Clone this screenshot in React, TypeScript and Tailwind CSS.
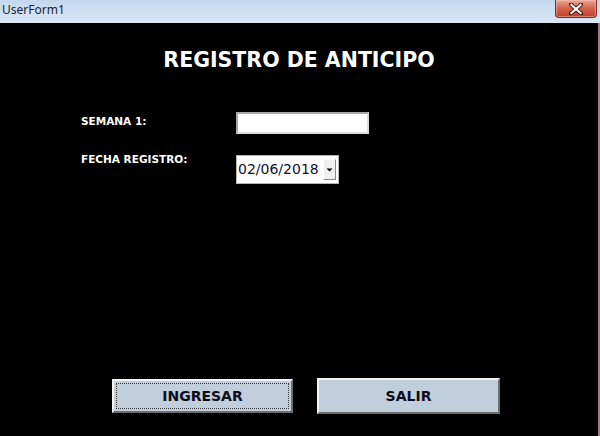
import React from "react";

const CloseIcon = () => (
  <svg width="14" height="12" viewBox="0 0 14 12">
    <path d="M2 1.5 L12 10.5 M12 1.5 L2 10.5" stroke="#4a1a14" strokeWidth="4" strokeLinecap="square" />
    <path d="M2.5 2 L11.5 10 M11.5 2 L2.5 10" stroke="#ffffff" strokeWidth="2.2" strokeLinecap="square" />
  </svg>
);

const App = () => {
  return (
    <div className="w-[600px] h-[436px] flex flex-col overflow-hidden font-['DejaVu_Sans',sans-serif]">
      <div className="h-[23px] flex items-start justify-between bg-gradient-to-b from-[#c3d8ee] via-[#cfe0f2] to-[#dbe8f5] shrink-0">
        <span className="pl-[2px] pt-[3px] text-[12px] leading-[14px] text-[#1e1e2e] font-['Noto_Sans',sans-serif]">
          UserForm1
        </span>
        <div className="mr-[3px] w-[42px] h-[18px] flex items-center justify-center rounded-b-[4px] border border-t-0 border-[#7e2a1f] bg-gradient-to-b from-[#e8a595] via-[#d4624c] to-[#c0402a] shadow-[inset_0_0_0_1px_rgba(255,200,190,0.5)]">
          <CloseIcon />
        </div>
      </div>

      <div className="flex-1 flex flex-col bg-black border-r-2 border-[#9d7b88]">
        <h1 className="pt-[25px] text-center text-white font-bold text-[20.5px] leading-[24px]">
          REGISTRO DE ANTICIPO
        </h1>

        <div className="mt-[40px] pl-[81px] flex flex-col">
          <div className="flex items-start">
            <span className="w-[155px] pt-[3px] text-white font-bold text-[10.5px] leading-[13px]">
              SEMANA 1:
            </span>
            <div className="w-[133px] h-[22px] bg-white border-2 border-t-[#a8a8a8] border-l-[#a8a8a8] border-b-[#dcdcdc] border-r-[#dcdcdc]" />
          </div>

          <div className="mt-[18px] flex items-start">
            <span className="w-[155px] pt-[1px] text-white font-bold text-[10.5px] leading-[13px]">
              FECHA REGISTRO:
            </span>
            <div className="mt-[3px] w-[103px] h-[29px] flex items-center bg-white border border-[#b4b4b4]">
              <span className="flex-1 pl-[1px] text-[14px] leading-[17px] text-[#101038]">02/06/2018</span>
              <div className="mr-[2px] w-[13px] h-[21px] flex items-center justify-center bg-[#f0f0f0] border border-t-[#ffffff] border-l-[#ffffff] border-b-[#8a8a8a] border-r-[#8a8a8a]">
                <svg width="7" height="4" viewBox="0 0 7 4">
                  <path d="M0.5 0.5 H6.5 L3.5 3.5 Z" fill="#000" />
                </svg>
              </div>
            </div>
          </div>
        </div>

        <div className="mt-auto mb-[22px] pl-[112px] flex items-center gap-[24px]">
          <button className="w-[181px] h-[34px] p-[2px] bg-[#c1cedb] border-2 border-t-[#f4f4f4] border-l-[#f4f4f4] border-b-[#6f6f6f] border-r-[#6f6f6f]">
            <div className="w-full h-full flex items-center justify-center border border-dotted border-[#3a3a3a] text-[14px] font-bold text-[#0c0c1c]">
              INGRESAR
            </div>
          </button>
          <button className="w-[183px] h-[36px] flex items-center justify-center bg-[#c1cedb] border-2 border-t-[#f4f4f4] border-l-[#f4f4f4] border-b-[#6f6f6f] border-r-[#6f6f6f] text-[14px] font-bold text-[#0c0c1c]">
            SALIR
          </button>
        </div>
      </div>
    </div>
  );
};

export default App;
